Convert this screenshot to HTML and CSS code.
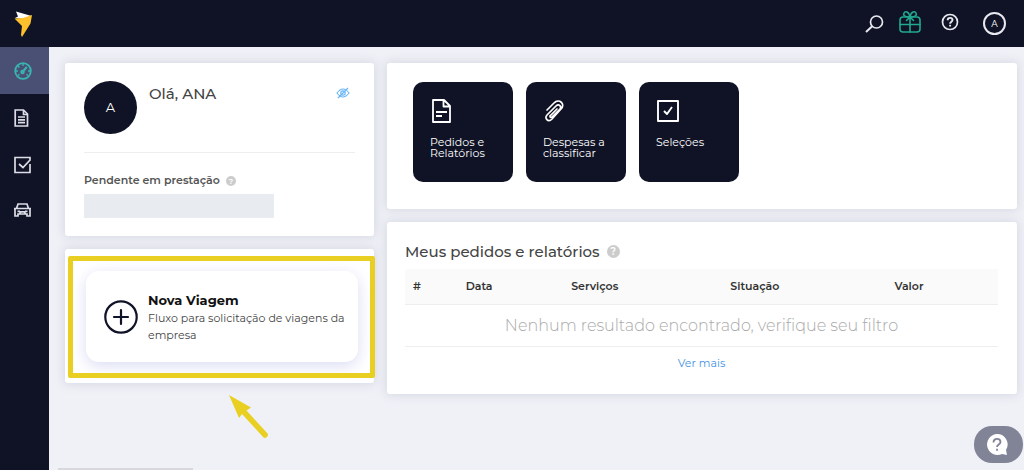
FILE: index.html
```html
<!DOCTYPE html>
<html lang="pt-BR">
<head>
<meta charset="utf-8">
<meta name="viewport" content="width=device-width, initial-scale=1">
<title>Painel</title>
<link rel="stylesheet" href="styles.css">
</head>
<body>
<div class="app">
  <header class="topbar">
    <a class="logo" href="#" aria-label="Início">
      <svg width="20" height="28" viewBox="0 0 20 28"><path d="M3 1.500 18.500 6 10 9 2 8 5 6.500Z" fill="#fff"/><path d="M1.500 8.500 10 8l9-3-1.500 8.500L9 27 8 25l1-9Z" fill="#fcc02c"/></svg>
    </a>
    <nav class="tools" aria-label="Ferramentas">
      <button class="tool" aria-label="Buscar"><svg width="20" height="20" viewBox="0 0 20 20" fill="none" stroke="#e8e9f0" stroke-width="1.700"><circle cx="12.500" cy="8" r="6"/><path d="M8.200 12.300 2 18" stroke-width="2"/></svg></button>
      <button class="tool" aria-label="Presentes"><svg class="gift" width="22" height="24" viewBox="0 0 22 24" fill="none" stroke="#20a98d" stroke-width="1.600" stroke-linejoin="round" stroke-linecap="round"><rect x="1" y="7" width="20" height="15" rx="3"/><path d="M1 14.500h20M11 7v15M11 7C5 7 4 5 5 3s5-2 6 4c1-6 5-6 6-4s0 4-6 4ZM11 7l-3.500 3.500M11 7l3.500 3.500"/></svg></button>
      <button class="tool" aria-label="Ajuda"><svg width="18" height="18" viewBox="0 0 18 18" fill="none" stroke="#e8e9f0" stroke-width="1.700"><circle cx="9" cy="9" r="7.500"/><path d="M6.700 7.200c0-3.200 4.800-3 4.800-.2 0 1.700-2.400 1.700-2.400 3.700M9.100 11.700v1.800" stroke-width="1.900"/></svg></button>
      <button class="tool user">A</button>
    </nav>
  </header>
  <nav class="sidebar" aria-label="Menu">
    <a class="side active" href="#" aria-label="Painel"><svg width="18" height="18" viewBox="0 0 18 18" fill="none" stroke="#38b5b0" stroke-width="1.800"><circle cx="9" cy="9" r="7.800"/><path d="M9 2v2M2 9h2M14 9h2M4 4l1.400 1.400M4.200 13.500l1.300-1.200M13.800 13.500l-1.300-1.200" stroke-width="1.400"/><path d="m8.500 10 4.300-5" stroke-width="2"/><circle cx="8.500" cy="10" r="1.300"/></svg></a>
    <a class="side" href="#" aria-label="Relatórios"><svg width="16" height="20" viewBox="0 0 16 20" fill="none" stroke="#dcdde6" stroke-width="1.700"><path d="M1.200 2h8.300l4 4v12H1.200ZM9.500 2v4.500h4M4 9h7M4 11.800h7M4 14.600h7"/></svg></a>
    <a class="side" href="#" aria-label="Seleções"><svg width="18" height="18" viewBox="0 0 18 18" fill="none" stroke="#dcdde6" stroke-width="1.700"><path d="M16 3.500V1.500H1v15h15V8M5 8l4 3.500 7.500-8"/></svg></a>
    <a class="side" href="#" aria-label="Veículos"><svg width="18" height="16" viewBox="0 0 18 16" fill="none" stroke="#dcdde6" stroke-width="1.700"><path d="M2.500 6.500 4 2h9l1.500 4.500M0 6.500h17M1 6.500V14h3v-2h9v2h3V6.500M3.500 9.300h2.500M11 9.300h2.500M5.500 12l1-2.200h4l1 2.200"/></svg></a>
  </nav>
  <main class="content">
    <div class="column">
      <section class="card profile">
        <div class="greeting">
          <div class="avatar">A</div>
          <h1 class="hello">Olá, ANA</h1>
          <button class="eye" aria-label="Ocultar valores"><svg width="14" height="12" viewBox="0 0 14 12" fill="none" stroke="#6bb5f5" stroke-width="1.200"><path d="M1 6q6-8 12 0-6 8-12 0ZM12 1 2 11"/><circle cx="7" cy="6" r="2.200"/></svg></button>
        </div>
        <div class="pending">
          <h2 class="pending-title">Pendente em prestação <span class="hint">?</span></h2>
          <div class="amount"></div>
        </div>
      </section>
      <section class="card trip-card">
        <button class="trip">
          <svg class="plus" width="34" height="34" viewBox="0 0 34 34" fill="none" stroke="#101327" stroke-width="2.200" stroke-linecap="round"><circle cx="17" cy="17" r="15.700"/><path d="M10 17h14M17 10v14"/></svg>
          <span class="trip-text"><strong class="trip-title">Nova Viagem</strong><span>Fluxo para solicitação de viagens da empresa</span></span>
        </button>
        <div class="highlight"></div>
        <svg class="arrow" width="42" height="46" viewBox="0 0 42 46"><path d="M1 1 23 13.500l-4.500 3L40 40q0 4-4 4L14 20l-3 4Z" fill="#e8cf22"/></svg>
      </section>
    </div>
    <div class="column">
      <section class="card shortcuts">
        <a class="tile" href="#"><svg width="24" height="26" viewBox="0 0 24 26" fill="none" stroke="#fff" stroke-width="1.800" stroke-linejoin="round"><path d="M3 2h11l6 6v16H3ZM13.500 2v6.500H20M6 14h11M6 18h6M12 13v2"/></svg><span>Pedidos e Relatórios</span></a>
        <a class="tile" href="#"><svg width="24" height="26" viewBox="0 0 24 26" fill="none" stroke="#fff" stroke-width="1.700" stroke-linecap="round"><path d="m4 12 7-7c5-5 12 1 7 6l-9 10c-4 4-8-1-5-4l9-9c3-3 6 1 4 3l-8 8c-2 1-3-1-1-2l6-6"/></svg><span>Despesas a classificar</span></a>
        <a class="tile" href="#"><svg width="24" height="26" viewBox="0 0 24 26" fill="none" stroke="#fff" stroke-width="1.900" stroke-linejoin="round"><path d="M2 3h20v20H2ZM8 13l3 3 5-7"/></svg><span>Seleções</span></a>
      </section>
      <section class="card orders">
        <h2 class="orders-title">Meus pedidos e relatórios <span class="hint large">?</span></h2>
        <table class="table">
          <colgroup><col class="c-id"><col class="c-date"><col class="c-service"><col class="c-status"><col class="c-value"><col></colgroup>
          <thead><tr><th>#</th><th>Data</th><th>Serviços</th><th>Situação</th><th>Valor</th><td></td></tr></thead>
          <tbody><tr><td class="empty" colspan="6">Nenhum resultado encontrado, verifique seu filtro</td></tr></tbody>
        </table>
        <a class="more" href="#">Ver mais</a>
      </section>
    </div>
  </main>
  <div class="status"></div>
  <button class="help" aria-label="Suporte"><svg width="22" height="22" viewBox="0 0 22 22"><path d="M11 0a10.500 10.500 0 1 0 5 20l5 1-1-5A10.500 10.500 0 0 0 11 0Z" fill="#fff"/><path d="M7.500 8.500c0-5 7-4.500 7-.5 0 2.500-3.500 2.500-3.500 5M11 14.700v2" fill="none" stroke="#808496" stroke-width="1.800"/></svg></button>
</div>
</body>
</html>
```
FILE: styles.css
```css
* { box-sizing: border-box; }
body { margin: 0; background: #f0f1f7; color: #444; font: 11px/17px Montserrat, Inter, "Liberation Sans", sans-serif; }
h1, h2 { margin: 0; font-weight: 500; }
button { border: 0; padding: 0; background: none; color: inherit; font: inherit; cursor: pointer; }
a { text-decoration: none; }
svg { display: block; flex: none; }

.app { display: grid; grid-template-columns: 49px minmax(0, 1fr); grid-template-rows: 47px 1fr; min-height: 100vh; }
.topbar { grid-column: 1 / -1; display: flex; align-items: center; justify-content: space-between; padding: 0 18px 0 13px; background: #101326; }
.tools { display: flex; align-items: center; }
.tool { display: flex; align-items: center; justify-content: center; width: 36px; height: 28px; }
.gift { margin-bottom: 4px; }
.tool:nth-child(3) { width: 44px; padding-bottom: 3px; }
.user { width: 23px; height: 23px; margin-left: 11px; border: 2px solid #e8e9f0; border-radius: 50%; color: #fff; font-size: 9px; }

.sidebar { background: #101326; }
.side { display: flex; align-items: center; height: 47px; padding-left: 14px; }
.side:last-child { height: 44px; }
.active { background: #4a5074; }

.content { display: grid; grid-template-columns: minmax(0, 309fr) minmax(0, 630fr); gap: 13px; align-items: start; padding: 16px 7px 16px 16px; }
.column { display: grid; gap: 13px; }
.card { position: relative; border-radius: 3px; background: #fff; box-shadow: 0 0 10px 2px #d9dbe5; }

.profile { padding: 18px 19px; }
.greeting { display: flex; align-items: flex-start; gap: 12px; padding-bottom: 18px; border-bottom: 1px solid #eee; }
.avatar { display: flex; align-items: center; justify-content: center; width: 53px; height: 53px; border-radius: 50%; background: #101326; color: #fff; font-size: 13px; }
.hello { flex: 1; font-size: 15px; line-height: 26px; font-weight: 500; color: #444; }
.eye { margin: 6px 5px 0 0; }
.pending { padding-top: 19px; }
.pending-title { display: flex; align-items: center; gap: 6px; font-size: 11px; line-height: 17px; font-weight: 600; color: #555; }
.hint { display: inline-flex; align-items: center; justify-content: center; width: 10px; height: 10px; border-radius: 50%; background: #ccc; color: #fff; font-size: 8px; line-height: 10px; font-weight: 600; }
.large { width: 13px; height: 13px; font-size: 10px; }
.amount { width: 70%; height: 24px; margin-top: 5px; background: #e8ebef; }

.trip-card { padding: 22px 16px 21px 21px; }
.trip { display: flex; align-items: center; gap: 10px; width: 100%; min-height: 91px; padding: 16px 12px 16px 18px; border-radius: 13px; background: #fff; box-shadow: 0 4px 16px #dadcf4; text-align: left; }
.trip-text { display: grid; color: #444; }
.trip-title { font-size: 13px; line-height: 20px; font-weight: 700; color: #111; }
.highlight { position: absolute; inset: 7px -1px 5px 3px; border: 5px solid #e8cf22; border-radius: 2px; pointer-events: none; }
.arrow { position: absolute; left: 163px; top: 145px; pointer-events: none; }

.shortcuts { display: flex; flex-wrap: wrap; gap: 13px; padding: 19px 26px 27px; }
.tile { display: flex; flex-direction: column; gap: 13px; width: 100px; height: 100px; padding: 16px 12px 16px 17px; border-radius: 10px; background: #101326; color: #fff; font-size: 11px; line-height: 11px; }

.orders { display: flex; flex-direction: column; padding: 18px 19px 22px 18px; }
.orders-title { display: flex; align-items: center; gap: 7px; padding-bottom: 6px; font-size: 15px; line-height: 23px; font-weight: 500; color: #444; }
.table { width: 100%; border-collapse: collapse; table-layout: fixed; }
.c-id { width: 4%; }
.c-date { width: 17%; }
.c-service { width: 22%; }
.c-status { width: 32%; }
.c-value { width: 20%; }
.table thead { background: #fafafa; }
.table th { height: 35px; padding: 0; border-bottom: 1px solid #eee; font-size: 11px; font-weight: 600; color: #333; text-align: center; }
.table td { padding: 0; border-bottom: 1px solid #eee; }
.table .empty { height: 42px; font-size: 16px; font-weight: 300; color: #aaa; text-align: center; }
.more { align-self: center; padding-top: 8px; color: #4593df; }

.status { position: fixed; left: 58px; bottom: 0; width: 135px; height: 2px; background: #d8d8dc; }
.help { position: fixed; right: 1px; bottom: 7px; display: flex; align-items: center; justify-content: center; width: 49px; height: 37px; padding-right: 4px; border-radius: 18px; background: #808496; }
```
